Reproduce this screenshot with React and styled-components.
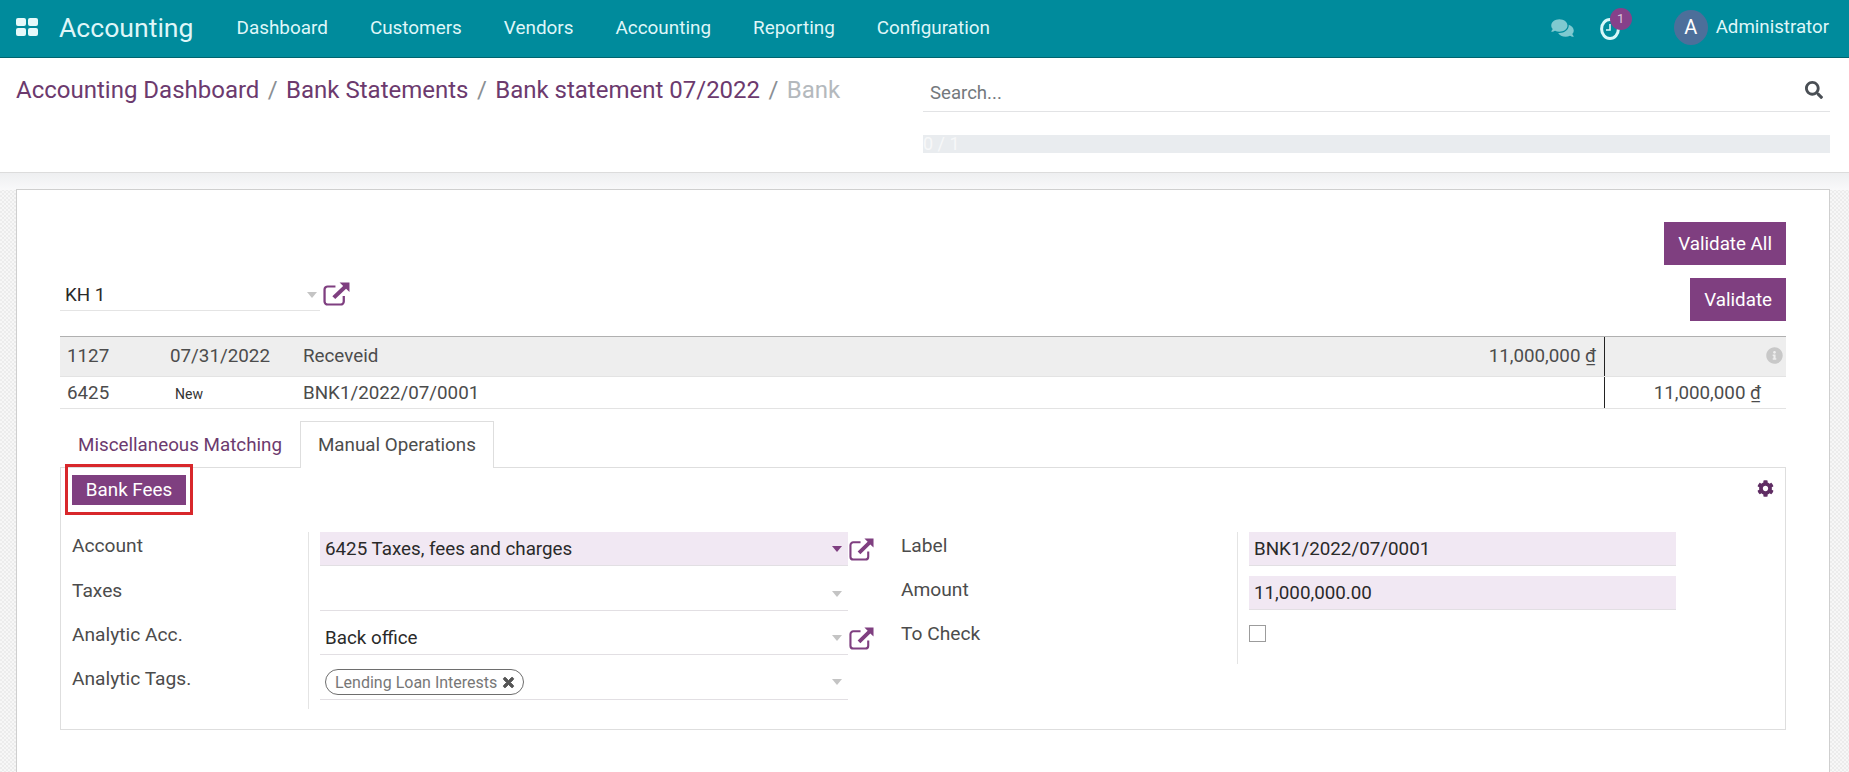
import React from 'react';
import styled, { createGlobalStyle } from 'styled-components';
import { FaComments, FaCog, FaSearch, FaInfoCircle, FaTimes } from 'react-icons/fa';

const PURPLE = '#7f3f80';
const TEXT = '#4c4c4c';

const GlobalStyle = createGlobalStyle`
  html, body {
    margin: 0;
    height: 100%;
    overflow: hidden;
    background: #fff;
    font-family: Roboto, "Liberation Sans", sans-serif;
    font-size: 18.8px;
    color: ${TEXT};
  }
  * { box-sizing: border-box; }
`;

const Page = styled.div`
  height: 772px;
  display: flex;
  flex-direction: column;
  overflow: hidden;
`;

// top bar
const Navbar = styled.header`
  height: 58px;
  flex: none;
  display: flex;
  align-items: center;
  background: #008b9c;
  border-bottom: 1px solid #00646f;
  color: #dff6f8;
  padding: 0 20px 3px 16px;
`;

const AppsIcon = styled.svg`
  width: 22px;
  height: 18px;
  fill: #e6f9fa;
`;

const Brand = styled.div`
  font-size: 26.6px;
  margin: 0 22px 0 21px;
`;

const Menu = styled.nav`
  display: flex;
  flex: 1;
`;

const MenuItem = styled.a`
  padding: 0 21px;
  font-size: 18.9px;
`;

const Systray = styled.div`
  display: flex;
  align-items: center;
`;

const ChatIcon = styled(FaComments)`
  width: 23px;
  height: 20px;
  margin-top: 2px;
  color: #7fc9d0;
  margin-right: 26px;
`;

const ActivityWrap = styled.div`
  position: relative;
  width: 20px;
  height: 22px;
  margin-top: 4px;
  margin-right: 54px;
`;

const ClockSvg = styled.svg`
  display: block;
  width: 20px;
  height: 22px;
`;

const Badge = styled.span`
  position: absolute;
  left: 10px;
  top: -10px;
  width: 22px;
  height: 22px;
  border-radius: 50%;
  background: #86418a;
  font-size: 13px;
  line-height: 21px;
  text-align: center;
  color: #d9c6dc;
`;

const Avatar = styled.span`
  width: 34px;
  height: 35px;
  border-radius: 50%;
  background: #4c6f9a;
  color: #fff;
  font-size: 20px;
  line-height: 35px;
  text-align: center;
  margin-right: 8px;
  margin-top: 1px;
`;

const UserName = styled.span`
  font-size: 18.7px;
`;

// breadcrumb + search
const ControlPanel = styled.section`
  height: 115px;
  flex: none;
  display: flex;
  justify-content: space-between;
  background: #fff;
  border-bottom: 1px solid #dcdcdc;
  padding: 0 19px 0 16px;
`;

const Breadcrumb = styled.div`
  display: flex;
  gap: 8.4px;
  font-size: 24px;
  padding-top: 18px;
  color: #8a8f94;
`;

const Crumb = styled.a`
  color: ${(p) => (p.$current ? '#b4b9bd' : '#6c3a6e')};
`;

const SearchColumn = styled.div`
  width: 907px;
`;

const SearchBox = styled.div`
  height: 54px;
  margin-bottom: 23px;
  padding: 24px 7px 0 7px;
  display: flex;
  justify-content: space-between;
  border-bottom: 1px solid #e2e3e5;
  font-size: 18.6px;
  color: #74797d;
  svg {
    width: 18px;
    height: 18px;
    color: #4a4f55;
    margin-top: -1px;
  }
`;

const Progress = styled.div`
  height: 18px;
  background: #e9ecef;
  color: #f7f8f9;
  font-size: 18px;
  line-height: 18px;
`;

// textured area round the sheet, with the smooth band under the control panel
const Backdrop = styled.main`
  flex: 1;
  min-height: 0;
  padding: 16px 19px 0 16px;
  background-color: #f7f7f7;
  background-image: linear-gradient(#eeeff1, #f9f9fa),
    linear-gradient(45deg, #ececec 25%, transparent 25%, transparent 75%, #ececec 75%),
    linear-gradient(45deg, #ececec 25%, transparent 25%, transparent 75%, #ececec 75%);
  background-size: 100% 17px, 4px 4px, 4px 4px;
  background-repeat: no-repeat, repeat, repeat;
  background-position: 0 0, 0 0, 2px 2px;
`;

const Sheet = styled.div`
  height: 100%;
  background: #fff;
  border: 1px solid #cfcfcf;
  border-bottom: none;
  padding: 32px 43px 0 43px;
`;

const SheetHeader = styled.div`
  height: 99px;
  margin-bottom: 15px;
  display: flex;
  justify-content: space-between;
  align-items: flex-end;
`;

const PartnerRow = styled.div`
  display: flex;
  align-items: flex-start;
  margin-bottom: 10px;
`;

const PartnerSelect = styled.div`
  width: 260px;
  height: 31px;
  display: flex;
  align-items: center;
  justify-content: space-between;
  border-bottom: 1px solid #e4e4e4;
  padding: 0 3px 0 5px;
  color: #2a2a2a;
`;

const Actions = styled.div`
  display: flex;
  flex-direction: column;
  align-items: flex-end;
  gap: 13px;
`;

const PrimaryButton = styled.button`
  height: 43px;
  padding: 0 14px;
  border: none;
  background: ${PURPLE};
  color: #fff;
  font: inherit;
  font-size: 18.8px;
`;

const Caret = styled.span`
  width: 0;
  height: 0;
  flex: none;
  border-left: 5px solid transparent;
  border-right: 5px solid transparent;
  border-top: 6px solid ${(p) => (p.$active ? PURPLE : '#c4c4c4')};
`;

const LinkSvg = styled.svg`
  flex: none;
  width: ${(p) => (p.$large ? 27 : 25)}px;
  height: ${(p) => (p.$large ? 24 : 23)}px;
  margin-left: ${(p) => (p.$large ? 3 : 1)}px;
  margin-top: ${(p) => (p.$large ? 2 : 6)}px;
`;

const LinkIcon = ({ large }) => (
  <LinkSvg viewBox="0 0 26 24" preserveAspectRatio="none" $large={large}>
    <path d="M12 4.5H4.5a3 3 0 0 0-3 3v12a3 3 0 0 0 3 3H17a3 3 0 0 0 3-3V14" fill="none" stroke="#7f3f80" strokeWidth="2.2" />
    <path d="M16 0.5H25.5V10L22.2 6.8L11.8 17L9 14.2L19.4 4Z" fill="#7f3f80" />
  </LinkSvg>
);

// statement lines
const Line = styled.div`
  display: grid;
  grid-template-columns: 103px 133px 1fr 182px;
  height: ${(p) => p.$h}px;
  background: ${(p) => (p.$head ? '#eeeeee' : '#fff')};
  border-top: ${(p) => (p.$head ? '1px solid #b0b0b0' : 'none')};
  border-bottom: 1px solid #e3e3e3;
`;

const Cell = styled.div`
  display: flex;
  align-items: center;
  justify-content: ${(p) => (p.$spread ? 'space-between' : 'flex-start')};
  padding: ${(p) => (p.$small ? '2px 0 0 12px' : `0 8px ${p.$raised ? 2 : 0}px 7px`)};
  font-size: ${(p) => (p.$small ? '14px' : 'inherit')};
  color: ${(p) => (p.$small ? '#333' : 'inherit')};
`;

const SideCell = styled.div`
  display: flex;
  align-items: center;
  justify-content: flex-end;
  border-left: 1px solid #222;
  padding-right: ${(p) => p.$pad}px;
  svg {
    width: 17px;
    height: 17px;
    margin-bottom: 2px;
    color: #c8c8c8;
  }
`;

// tabs
const Tabs = styled.div`
  display: flex;
  margin-top: 12px;
  height: 47px;
`;

const Tab = styled.div`
  padding: 0 17px;
  height: ${(p) => (p.$active ? '47px' : '46px')};
  display: flex;
  align-items: center;
  position: relative;
  z-index: 1;
  background: #fff;
  color: ${(p) => (p.$active ? TEXT : '#6c3a6e')};
  border: 1px solid ${(p) => (p.$active ? '#dedede' : 'transparent')};
  border-bottom: none;
`;

const Panel = styled.div`
  position: relative;
  margin-top: -1px;
  height: 263px;
  border: 1px solid #dedede;
  padding: 7px 11px 0 10px;
`;

const PanelTop = styled.div`
  display: flex;
  justify-content: space-between;
  margin-bottom: 27px;
  padding-left: 1px;
  svg {
    width: 17px;
    height: 17px;
    color: #5f2d63;
    margin-top: 5px;
  }
`;

const FeeButton = styled.button`
  width: 114px;
  height: 30px;
  border: none;
  background: ${PURPLE};
  color: #fff;
  font: inherit;
  font-size: 18.8px;
  line-height: 28px;
  padding: 0 0 1px;
`;

const Highlight = styled.div`
  position: absolute;
  z-index: 2;
  left: 4px;
  top: -4px;
  width: 128px;
  height: 51px;
  border: 3px solid #d8272b;
  pointer-events: none;
`;

const Form = styled.div`
  display: flex;
  margin-left: 1px;
  gap: 21px;
`;

const FormGroup = styled.div`
  display: grid;
  align-items: start;
  grid-template-columns: ${(p) => p.$cols};
  grid-template-rows: ${(p) => p.$rows};
`;

const Label = styled.div`
  font-size: 19.2px;
  line-height: 28px;
`;

const FieldCell = styled.div`
  height: 100%;
  display: flex;
  align-items: flex-start;
  border-left: 1px solid #e4e4e4;
  padding-left: 11px;
`;

const Field = styled.div`
  width: ${(p) => p.$w}px;
  height: ${(p) => p.$h || 34}px;
  flex: none;
  display: flex;
  align-items: center;
  justify-content: space-between;
  padding: 0 6px 0 5px;
  color: #2a2a2a;
  background: ${(p) => (p.$required ? '#f1e8f3' : '#fff')};
  border-bottom: 1px solid #e2dfe3;
`;

const Tag = styled.span`
  height: 26px;
  display: inline-flex;
  align-items: center;
  gap: 5px;
  padding: 0 8px 0 9px;
  border: 1px solid #6e6e6e;
  border-radius: 13px;
  font-size: 16px;
  color: #777;
  svg {
    width: 13px;
    height: 15px;
    color: #555;
    stroke: #555;
    stroke-width: 30px;
  }
`;

const Check = styled.span`
  display: block;
  width: 17px;
  height: 17px;
  margin-top: 5px;
  border: 1px solid #9c9c9c;
`;

export default function App() {
  return (
    <Page>
      <GlobalStyle />
      <Navbar>
        <AppsIcon viewBox="0 0 22 18">
          <rect x="0" y="0" width="10" height="8" rx="2" />
          <rect x="12" y="0" width="10" height="8" rx="2" />
          <rect x="0" y="10" width="10" height="8" rx="2" />
          <rect x="12" y="10" width="10" height="8" rx="2" />
        </AppsIcon>
        <Brand>Accounting</Brand>
        <Menu>
          {['Dashboard', 'Customers', 'Vendors', 'Accounting', 'Reporting', 'Configuration'].map((m) => (
            <MenuItem key={m}>{m}</MenuItem>
          ))}
        </Menu>
        <Systray>
          <ChatIcon />
          <ActivityWrap>
            <ClockSvg viewBox="0 0 20 22">
              <ellipse cx="10" cy="11" rx="8.4" ry="9.4" fill="none" stroke="#d8f7f9" strokeWidth="3" />
              <path d="M10 6v6H6" fill="none" stroke="#d8f7f9" strokeWidth="1.6" />
            </ClockSvg>
            <Badge>1</Badge>
          </ActivityWrap>
          <Avatar>A</Avatar>
          <UserName>Administrator</UserName>
        </Systray>
      </Navbar>

      <ControlPanel>
        <Breadcrumb>
          <Crumb>Accounting Dashboard</Crumb>/
          <Crumb>Bank Statements</Crumb>/
          <Crumb>Bank statement 07/2022</Crumb>/
          <Crumb $current>Bank</Crumb>
        </Breadcrumb>
        <SearchColumn>
          <SearchBox>
            Search...
            <FaSearch />
          </SearchBox>
          <Progress>0 / 1</Progress>
        </SearchColumn>
      </ControlPanel>

      <Backdrop>
        <Sheet>
          <SheetHeader>
            <PartnerRow>
              <PartnerSelect>
                KH 1
                <Caret />
              </PartnerSelect>
              <LinkIcon large />
            </PartnerRow>
            <Actions>
              <PrimaryButton>Validate All</PrimaryButton>
              <PrimaryButton>Validate</PrimaryButton>
            </Actions>
          </SheetHeader>

          <Line $head $h={41}>
            <Cell $raised>1127</Cell>
            <Cell $raised>07/31/2022</Cell>
            <Cell $raised $spread>
              <span>Receveid</span>
              <span>11,000,000&nbsp;₫</span>
            </Cell>
            <SideCell $pad={3}>
              <FaInfoCircle />
            </SideCell>
          </Line>
          <Line $h={32}>
            <Cell>6425</Cell>
            <Cell $small>New</Cell>
            <Cell>BNK1/2022/07/0001</Cell>
            <SideCell $pad={25}>11,000,000&nbsp;₫</SideCell>
          </Line>

          <Tabs>
            <Tab>Miscellaneous Matching</Tab>
            <Tab $active>Manual Operations</Tab>
          </Tabs>
          <Panel>
            <Highlight />
            <PanelTop>
              <FeeButton>Bank Fees</FeeButton>
              <FaCog />
            </PanelTop>
            <Form>
              <FormGroup $cols="236px 572px" $rows="45px 44px 44px 44px">
                <Label>Account</Label>
                <FieldCell>
                  <Field $w={528} $required>
                    6425 Taxes, fees and charges
                    <Caret $active />
                  </Field>
                  <LinkIcon />
                </FieldCell>
                <Label>Taxes</Label>
                <FieldCell>
                  <Field $w={528}>
                    <span />
                    <Caret />
                  </Field>
                </FieldCell>
                <Label>Analytic Acc.</Label>
                <FieldCell>
                  <Field $w={528}>
                    Back office
                    <Caret />
                  </Field>
                  <LinkIcon />
                </FieldCell>
                <Label>Analytic Tags.</Label>
                <FieldCell>
                  <Field $w={528} $h={35}>
                    <Tag>
                      Lending Loan Interests
                      <FaTimes />
                    </Tag>
                    <Caret />
                  </Field>
                </FieldCell>
              </FormGroup>

              <FormGroup $cols="336px 440px" $rows="44px 44px 44px">
                <Label>Label</Label>
                <FieldCell>
                  <Field $w={427} $required>
                    BNK1/2022/07/0001
                  </Field>
                </FieldCell>
                <Label>Amount</Label>
                <FieldCell>
                  <Field $w={427} $required>
                    11,000,000.00
                  </Field>
                </FieldCell>
                <Label>To Check</Label>
                <FieldCell>
                  <Check />
                </FieldCell>
              </FormGroup>
            </Form>
          </Panel>
        </Sheet>
      </Backdrop>
    </Page>
  );
}
